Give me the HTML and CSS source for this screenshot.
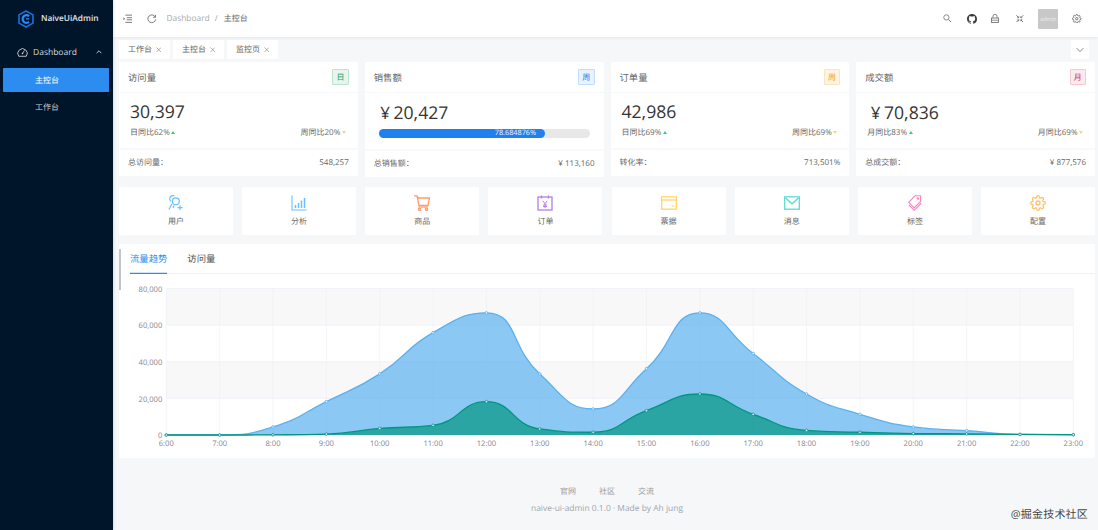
FILE: index.html
```html
<!DOCTYPE html>
<html lang="zh-CN">
<head>
<meta charset="utf-8">
<title>NaiveUiAdmin</title>
<link rel="stylesheet" href="styles.css">
</head>
<body>
<div class="app">
  <aside class="sidebar">
    <div class="brand">
      <svg class="brand-icon" viewBox="0 0 16 18"><path d="M8 1 15 4.900v8.200L8 17 1 13.100V4.900z" fill="none" stroke="#1d6fe0" stroke-width="1.600"/><path d="M11 6.200A3.800 3.800 0 1 0 11 11.800" fill="none" stroke="#2a8cf5" stroke-width="2.200"/><path d="M8 8.900h3.200" stroke="#2a8cf5" stroke-width="1.300"/></svg>
      <span>NaiveUiAdmin</span>
    </div>
    <div class="menu-group">
      <svg class="menu-icon" viewBox="0 0 14 14"><path d="M2.200 11.800A6 6 0 1 1 11.800 11.800z" fill="none" stroke="#d5d8dc" stroke-width="1.100"/><path d="M7 8 9.500 4.500" stroke="#d5d8dc" stroke-width="1.100"/><circle cx="7" cy="8.200" r="1" fill="#d5d8dc"/></svg>
      <span class="menu-label">Dashboard</span>
      <svg class="menu-arrow" viewBox="0 0 10 10"><path d="M2 6.500 5 3.500 8 6.500" fill="none" stroke="#d5d8dc" stroke-width="1.100"/></svg>
    </div>
    <div class="menu-item active">主控台</div>
    <div class="menu-item">工作台</div>
  </aside>

  <div class="content">
    <header class="topbar">
      <div class="top-left">
        <svg class="ti" viewBox="0 0 10 10"><path d="M2.500 1.200h7M4 3.900h5.500M4 6.100h5.500M2.500 8.800h7" stroke="#666" stroke-width=".9"/><path d="M.5 3.500 2.200 5 .5 6.500z" fill="#666"/></svg>
        <svg class="ti reload" viewBox="0 0 10 10"><path d="M8.700 3.200A4.100 4.100 0 1 0 9.100 5.600" fill="none" stroke="#666" stroke-width=".9"/><path d="M8.900 .9v2.600H6.500" fill="none" stroke="#666" stroke-width=".9"/></svg>
        <nav class="crumbs"><span class="crumb-muted">Dashboard</span><span class="crumb-sep">/</span><span class="crumb-current">主控台</span></nav>
      </div>
      <div class="top-right">
        <svg class="ti s-search" viewBox="0 0 10 10"><circle cx="4" cy="4" r="3.100" fill="none" stroke="#777" stroke-width="1"/><path d="M6.300 6.300 9.500 9.500" stroke="#777" stroke-width="1.100"/></svg>
        <svg class="ti s-git" viewBox="0 0 16 16"><path fill="#3a3a3a" d="M8 0C3.580 0 0 3.580 0 8c0 3.540 2.290 6.530 5.470 7.590.4.070.55-.17.55-.38 0-.19-.01-.82-.01-1.490-2.010.37-2.530-.49-2.690-.94-.09-.23-.48-.94-.82-1.130-.28-.15-.68-.52-.01-.53.63-.01 1.080.58 1.230.82.720 1.210 1.870.87 2.330.66.070-.52.280-.87.510-1.070-1.780-.2-3.640-.89-3.640-3.950 0-.87.310-1.590.820-2.150-.08-.2-.36-1.020.080-2.120 0 0 .670-.21 2.200.820.640-.18 1.320-.27 2-.27.680 0 1.360.090 2 .270 1.530-1.040 2.200-.82 2.200-.82.440 1.100.160 1.920.080 2.120.510.560.820 1.270.820 2.150 0 3.070-1.870 3.750-3.650 3.950.290.250.540.730.540 1.480 0 1.070-.01 1.930-.01 2.200 0 .210.150.460.550.380A8.013 8.013 0 0 0 16 8c0-4.420-3.580-8-8-8z"/></svg>
        <svg class="s-lock" viewBox="0 0 8 9"><path d="M2 4V2.300a2 2 0 0 1 4 0V4" fill="none" stroke="#777" stroke-width=".9"/><rect x=".5" y="4" width="7" height="4.500" fill="none" stroke="#777" stroke-width=".9"/><path d="M.5 6.200h7" stroke="#777" stroke-width=".8"/></svg>
        <svg class="s-full" viewBox="0 0 8 8"><g fill="none" stroke="#666" stroke-width=".9"><path d="M.3.300 2.800 2.800M7.700.3 5.200 2.800M.3 7.700 2.800 5.200M7.700 7.700 5.200 5.200"/><path d="M1.400 2.900h1.500V1.400M6.600 2.900H5.100V1.400M1.400 5.100h1.500v1.500M6.600 5.100H5.100v1.500"/></g></svg>
        <div class="avatar">admin</div>
        <svg class="ti s-gear" viewBox="0 0 24 24"><g fill="none" stroke="#666" stroke-width="2.200"><circle cx="12" cy="12" r="3"/><path d="M19.400 15a1.650 1.650 0 0 0 .33 1.820l.06.06a2 2 0 0 1 0 2.830 2 2 0 0 1-2.830 0l-.06-.06a1.650 1.650 0 0 0-1.820-.33 1.650 1.650 0 0 0-1 1.510V21a2 2 0 0 1-2 2 2 2 0 0 1-2-2v-.09A1.650 1.650 0 0 0 9 19.400a1.650 1.650 0 0 0-1.820.33l-.06.06a2 2 0 0 1-2.830 0 2 2 0 0 1 0-2.830l.06-.06a1.650 1.650 0 0 0 .33-1.820 1.650 1.650 0 0 0-1.510-1H3a2 2 0 0 1-2-2 2 2 0 0 1 2-2h.09A1.650 1.650 0 0 0 4.600 9a1.650 1.650 0 0 0-.33-1.820l-.06-.06a2 2 0 0 1 0-2.830 2 2 0 0 1 2.830 0l.06.06a1.650 1.650 0 0 0 1.820.33H9a1.650 1.650 0 0 0 1-1.510V3a2 2 0 0 1 2-2 2 2 0 0 1 2 2v.09a1.650 1.650 0 0 0 1 1.510 1.650 1.650 0 0 0 1.820-.33l.06-.06a2 2 0 0 1 2.830 0 2 2 0 0 1 0 2.830l-.06.06a1.650 1.650 0 0 0-.33 1.820V9a1.650 1.650 0 0 0 1.510 1H21a2 2 0 0 1 2 2 2 2 0 0 1-2 2h-.09a1.650 1.650 0 0 0-1.510 1z"/></g></svg>
      </div>
    </header>

    <div class="tabs">
      <div class="tab">工作台<svg class="x" viewBox="0 0 6 6"><path d="M.5.500l5 5M5.500.500l-5 5" stroke="#888" stroke-width=".7"/></svg></div>
      <div class="tab">主控台<svg class="x" viewBox="0 0 6 6"><path d="M.5.500l5 5M5.500.500l-5 5" stroke="#888" stroke-width=".7"/></svg></div>
      <div class="tab">监控页<svg class="x" viewBox="0 0 6 6"><path d="M.5.500l5 5M5.500.500l-5 5" stroke="#888" stroke-width=".7"/></svg></div>
      <div class="tab-more"><svg viewBox="0 0 8 6" class="more-arrow"><path d="M.7 1.200 4 4.600 7.300 1.200" fill="none" stroke="#666" stroke-width=".8"/></svg></div>
    </div>

    <section class="cards">
      <article class="card">
        <div class="card-head"><span>访问量</span><span class="tag green">日</span></div>
        <div class="card-body">
          <div class="num">30,397</div>
          <div class="stats"><span>日同比62%<i class="up"></i></span><span>周同比20%<i class="down"></i></span></div>
        </div>
        <div class="card-foot"><span>总访问量：</span><span>548,257</span></div>
      </article>
      <article class="card progress-card">
        <div class="card-head"><span>销售额</span><span class="tag blue">周</span></div>
        <div class="card-body">
          <div class="num"><span class="cur">¥</span>20,427</div>
          <div class="bar"><div class="bar-fill">78.684876%</div></div>
        </div>
        <div class="card-foot"><span>总销售额：</span><span>¥ 113,160</span></div>
      </article>
      <article class="card">
        <div class="card-head"><span>订单量</span><span class="tag orange">周</span></div>
        <div class="card-body">
          <div class="num">42,986</div>
          <div class="stats"><span>日同比69%<i class="up"></i></span><span>周同比69%<i class="down"></i></span></div>
        </div>
        <div class="card-foot"><span>转化率：</span><span>713,501%</span></div>
      </article>
      <article class="card money-card">
        <div class="card-head"><span>成交额</span><span class="tag red">月</span></div>
        <div class="card-body">
          <div class="num"><span class="cur">¥</span>70,836</div>
          <div class="stats"><span>月同比83%<i class="up"></i></span><span>月同比69%<i class="down"></i></span></div>
        </div>
        <div class="card-foot"><span>总成交额：</span><span>¥ 877,576</span></div>
      </article>
    </section>

    <section class="shortcuts">
      <div class="shortcut">
        <svg class="si" viewBox="0 0 16 16" fill="none" stroke="#69c0ff" stroke-width="1.200"><circle cx="7.800" cy="6.300" r="3.500"/><path d="M6.500 .8C4.500.2 2.300 1 1.800 3c-.3 1.300.2 2.500 1 3.500M3.800 9 1 14.500M6 10.500 5 13M12 10.500v4.500M9.500 12.700h5"/></svg>
        <span>用户</span>
      </div>
      <div class="shortcut">
        <svg class="si" viewBox="0 0 16 16" fill="none" stroke="#69c0ff"><path d="M1 .5V15h14.500" stroke-width="1.100"/><path d="M4.500 10v3M7.500 8v5M10.500 5.500V13M13.500 3v10" stroke-width="1.500"/></svg>
        <span>分析</span>
      </div>
      <div class="shortcut">
        <svg class="si" viewBox="0 0 16 16" fill="none" stroke="#ff9c6e" stroke-width="1.300"><path d="M0 .8h3l1.500 2.200h11L14 10.500H5L3 .8"/><path d="M4.500 12h9.500"/><circle cx="5.500" cy="14.300" r="1.100"/><circle cx="12.500" cy="14.300" r="1.100"/></svg>
        <span>商品</span>
      </div>
      <div class="shortcut">
        <svg class="si" viewBox="0 0 16 16" fill="none" stroke="#b37feb" stroke-width="1.300"><rect x="1" y="2" width="14" height="13"/><path d="M4.500 .5v3M11.500 .5v3"/><path d="M5.800 5.800 8 8.800l2.200-3M8 8.800V13M6 10h4M6 11.500h4" stroke-width="1"/></svg>
        <span>订单</span>
      </div>
      <div class="shortcut">
        <svg class="si" viewBox="0 0 16 16" fill="none" stroke="#ffd666" stroke-width="1.300"><rect x=".7" y="1.800" width="14.600" height="12.400"/><path d="M.7 5h14.600"/><path d="M10.500 11h3" stroke-width="1.100"/></svg>
        <span>票据</span>
      </div>
      <div class="shortcut">
        <svg class="si" viewBox="0 0 16 16" fill="none" stroke="#5cdbd3" stroke-width="1.300"><rect x=".7" y="1.800" width="14.600" height="12.400"/><path d="M1.500 3 8 8.800 14.500 3"/></svg>
        <span>消息</span>
      </div>
      <div class="shortcut">
        <svg class="si" viewBox="0 0 16 16" fill="none" stroke="#ff85c0" stroke-width="1.100"><path d="M8 .8h5.500v5.700L7.200 13 1.800 7.300z"/><path d="M14.300 8 7.200 15.300 2 10"/><circle cx="10.800" cy="3.500" r=".7"/></svg>
        <span>标签</span>
      </div>
      <div class="shortcut">
        <svg class="si" viewBox="0 0 24 24" fill="none" stroke="#ffc069" stroke-width="1.900"><circle cx="12" cy="12" r="3"/><path d="M19.400 15a1.650 1.650 0 0 0 .33 1.820l.06.06a2 2 0 0 1 0 2.830 2 2 0 0 1-2.830 0l-.06-.06a1.650 1.650 0 0 0-1.820-.33 1.650 1.650 0 0 0-1 1.510V21a2 2 0 0 1-2 2 2 2 0 0 1-2-2v-.09A1.650 1.650 0 0 0 9 19.400a1.650 1.650 0 0 0-1.820.33l-.06.06a2 2 0 0 1-2.830 0 2 2 0 0 1 0-2.830l.06-.06a1.650 1.650 0 0 0 .33-1.820 1.650 1.650 0 0 0-1.510-1H3a2 2 0 0 1-2-2 2 2 0 0 1 2-2h.09A1.650 1.650 0 0 0 4.600 9a1.650 1.650 0 0 0-.33-1.820l-.06-.06a2 2 0 0 1 0-2.830 2 2 0 0 1 2.830 0l.06.06a1.650 1.650 0 0 0 1.820.33H9a1.650 1.650 0 0 0 1-1.510V3a2 2 0 0 1 2-2 2 2 0 0 1 2 2v.09a1.650 1.650 0 0 0 1 1.510 1.650 1.650 0 0 0 1.820-.33l.06-.06a2 2 0 0 1 2.830 0 2 2 0 0 1 0 2.830l-.06.06a1.650 1.650 0 0 0-.33 1.820V9a1.650 1.650 0 0 0 1.510 1H21a2 2 0 0 1 2 2 2 2 0 0 1-2 2h-.09a1.650 1.650 0 0 0-1.510 1z"/></svg>
        <span>配置</span>
      </div>
    </section>

    <section class="panel">
      <div class="scroll-thumb"></div>
      <div class="panel-tabs">
        <div class="panel-tab current">流量趋势</div>
        <div class="panel-tab">访问量</div>
      </div>
      <div id="chart" class="chart"></div>
    </section>

    <footer class="foot">
      <div class="foot-links"><span>官网</span><span>社区</span><span>交流</span></div>
      <div class="copy">naive-ui-admin 0.1.0 · Made by Ah jung</div>
    </footer>
  </div>
  <div class="watermark">@掘金技术社区</div>
</div>
<script src="chart.js"></script>
</body>
</html>
```
FILE: styles.css
```css
* { box-sizing: border-box; }
html, body { margin: 0; padding: 0; height: 100%; overflow: hidden; }
body {
  font-family: "Open Sans", "Noto Sans CJK SC", sans-serif;
  font-size: 8px;
  color: #515a6e;
  background: #f5f7f9;
  text-rendering: geometricPrecision;
}
.app { position: relative; display: flex; width: 1098px; height: 530px; overflow: hidden; }

/* sidebar */
.sidebar { width: 113px; flex: none; background: #00152a; color: #d5d8dc; box-shadow: 1px 0 2px rgba(29,35,41,.12); z-index: 2; }
.brand { display: flex; align-items: center; gap: 7.500px; height: 37px; padding-left: 17.500px; color: #e3e6ea; font-size: 8.300px; font-weight: 600; }
.brand-icon { width: 16px; height: 18px; flex: none; }
.menu-group { display: flex; align-items: center; height: 20px; margin-top: 5px; padding: 0 10px 0 17px; color: #d5d8dc; font-size: 8.500px; }
.menu-icon { width: 11px; height: 11px; margin-right: 5px; }
.menu-label { flex: 1; }
.menu-arrow { width: 8px; height: 8px; }
.menu-item { display: flex; align-items: center; height: 24px; margin: 6px 4.500px 3px 3px; padding-left: 32px; color: #c6cbd1; font-size: 8px; border-radius: 1px; }
.menu-item.active { background: #2d8cf0; color: #fff; }
.menu-item + .menu-item { margin-top: 3px; }

/* main column */
.content { flex: 1; min-width: 0; display: flex; flex-direction: column; padding: 0; }
.topbar { display: flex; align-items: center; justify-content: space-between; height: 37px; flex: none; background: #fff; box-shadow: 0 1px 3px rgba(0,21,41,.07); padding: 0 16.200px 0 10px; }
.top-left, .top-right { display: flex; align-items: center; }
.ti { width: 9.500px; height: 9.500px; flex: none; }
.reload { margin-left: 14.500px; }
.crumbs { display: flex; align-items: center; margin-left: 10px; font-size: 8px; }
.crumb-muted { color: #aaa; font-size: 8.400px; }
.crumb-sep { margin: 0 6px 0 5px; color: #999; }
.crumb-current { color: #666; }
.s-search { width: 8.500px; height: 8.500px; }
.s-git { width: 10px; height: 10px; margin-left: 15.200px; }
.s-lock { width: 8px; height: 9px; margin-left: 14.300px; flex: none; }
.s-full { width: 7.500px; height: 7.500px; margin-left: 17px; flex: none; }
.avatar { width: 20px; height: 20px; margin-left: 14.800px; background: #c8c8c8; color: #eee; font-size: 5.500px; line-height: 20px; text-align: center; border-radius: 1px; }
.s-gear { margin-left: 14px; }

.tabs { display: flex; align-items: stretch; gap: 3px; height: 19px; margin: 3px 9px 0 6px; flex: none; }
.tab { display: flex; align-items: center; gap: 3.500px; padding: 0 9px; background: #fff; color: #666; font-size: 8px; border-radius: 1px; }
.x { width: 5.500px; height: 5.500px; }
.tab-more { display: flex; align-items: center; justify-content: center; width: 18px; margin-left: auto; background: #fff; border-radius: 1px; }
.more-arrow { width: 8px; height: 6px; }

/* stat cards */
.cards { display: grid; grid-template-columns: repeat(4, 1fr); column-gap: 7px; margin: 3px 3px 0 6px; align-items: start; flex: none; }
.card { background: #fff; border-radius: 1.500px; }
.card-head { display: flex; align-items: center; justify-content: space-between; height: 31px; padding: 0 9px; border-bottom: 1px solid #f5f7f9; color: #666; font-size: 9.330px; }
.tag { display: flex; align-items: center; justify-content: center; width: 16.500px; height: 16px; border: 1px solid; border-radius: 1px; font-size: 8px; }
.green { color: #18a058; background: #e8f5ee; border-color: #bfe3cf; }
.blue { color: #2080f0; background: #e9f2fe; border-color: #c2dcfb; }
.orange { color: #f0a020; background: #fdf4e4; border-color: #fbe3bd; }
.red { color: #d03050; background: #fbeaee; border-color: #f3c9d2; }
.card-body { padding: 7px 12px 0 11px; height: 57px; border-bottom: 2px solid #f8f9fb; }
.progress-card .card-body { padding: 7px 14px 0 14px; height: 58px; }
.num { font-size: 17.600px; line-height: 25px; height: 25px; color: #333; }
.progress-card .num { padding-left: 1.500px; }
.money-card .num { padding-left: 3.500px; }
.cur { margin-right: 3.500px; font-size: 17px; }
.stats { display: flex; justify-content: space-between; margin-top: 2px; height: 12px; line-height: 12px; color: #666; font-size: 8px; }
.up, .down { display: inline-block; width: 0; height: 0; margin-left: 1.500px; vertical-align: 1px; border-left: 2.200px solid transparent; border-right: 2.200px solid transparent; }
.up { border-bottom: 3px solid #18e070; }
.down { border-top: 3px solid #ffd666; }
.bar { height: 9px; margin-top: 4px; background: #e8e8e8; border-radius: 5px; }
.bar-fill { width: 78.68%; height: 9px; padding-right: 8.500px; background: #2080f0; border-radius: 5px; color: #eaf3ff; font-size: 7.300px; line-height: 9px; text-align: right; }
.card-foot { display: flex; align-items: center; justify-content: space-between; height: 26px; padding: 0 9px 2px; color: #666; font-size: 8px; }

/* shortcuts */
.shortcuts { display: grid; grid-template-columns: repeat(8, 1fr); column-gap: 9.300px; margin: 9.500px 3px 0 6px; flex: none; }
.shortcut { display: flex; flex-direction: column; align-items: center; height: 48px; padding-top: 8px; background: #fff; border-radius: 1.500px; color: #666; font-size: 8px; }
.si { width: 16px; height: 16px; flex: none; margin-bottom: 5px; }

/* chart panel */
.panel { position: relative; margin: 9.500px 3px 0 6px; height: 214px; background: #fff; border-radius: 1.500px; flex: none; }
.scroll-thumb { position: absolute; left: 0; top: 5px; width: 2px; height: 41px; background: #c4c4c6; }
.panel-tabs { display: flex; gap: 20px; height: 30px; margin-left: 11px; border-bottom: 1px solid #eff1f5; font-size: 9.330px; color: #555; }
.panel-tab { display: flex; align-items: center; height: 30px; padding: 0 0 2px; }
.panel-tab.current { color: #2d8cf0; box-shadow: inset 0 -1.300px 0 #2d8cf0; }
.chart { height: 184px; }
.chart svg { display: block; width: 976px; height: 184px; }
.axis { font-size: 7.600px; fill: #85858f; font-family: "Open Sans", sans-serif; }

/* footer */
.foot { flex: 1; text-align: center; color: #999; font-size: 8px; padding: 28px 0 0 3px; }
.foot-links { display: flex; justify-content: center; gap: 23px; line-height: 12px; }
.copy { margin-top: 4.500px; color: #a3a6ae; font-size: 8.450px; line-height: 12px; }

.watermark { position: absolute; right: 10px; bottom: 8px; color: #444; font-size: 11px; line-height: 14px; letter-spacing: .2px; text-shadow: 0 0 2px #fff; font-weight: 400; }
```
FILE: chart.js
```js
(function () {
  var blue = [0, 0, 4400, 18200, 33400, 55900, 66700, 33300, 14200, 36200, 66700, 44500, 22400, 11300, 4400, 2400, 300, 100];
  var teal = [0, 0, 100, 500, 3600, 5300, 18200, 3300, 1500, 13300, 22400, 11300, 2500, 1500, 800, 600, 300, 200];
  var x0 = 47.3, x1 = 954.3, y0 = 161, yTop = 14.5;
  var step = (x1 - x0) / 17;
  var yv = function (v) { return y0 - (v / 80000) * (y0 - yTop); };
  var xv = function (i) { return x0 + i * step; };
  var out = [];

  // split bands
  var h = (y0 - yTop) / 4;
  out.push('<rect x="' + x0 + '" y="' + yTop + '" width="' + (x1 - x0) + '" height="' + h + '" fill="#f8f8f9"/>');
  out.push('<rect x="' + x0 + '" y="' + (yTop + 2 * h) + '" width="' + (x1 - x0) + '" height="' + h + '" fill="#f8f8f9"/>');

  // grid
  var i;
  for (i = 0; i < 18; i++) {
    out.push('<path d="M' + xv(i) + ' ' + yTop + 'V' + y0 + '" stroke="#eff0f6" stroke-width=".7"/>');
  }
  for (i = 0; i < 5; i++) {
    var y = yTop + i * h;
    out.push('<path d="M' + x0 + ' ' + y + 'H' + x1 + '" stroke="#eff0f6" stroke-width="' + (i === 4 ? 1 : .8) + '"/>');
    out.push('<text class="axis" text-anchor="end" x="' + (x0 - 4) + '" y="' + (y + 3.2) + '">' + ['80,000', '60,000', '40,000', '20,000', '0'][i] + '</text>');
  }
  for (i = 0; i < 18; i++) {
    out.push('<text class="axis" text-anchor="middle" x="' + xv(i) + '" y="' + (y0 + 11) + '">' + (i + 6) + ':00</text>');
  }

  function smooth(data) {
    var pts = data.map(function (v, i) { return [xv(i), yv(v)]; });
    var s = 0.5, d = 'M' + pts[0][0] + ' ' + pts[0][1];
    var cpx = pts[0][0], cpy = pts[0][1];
    var clamp = function (v, a, b) { return Math.max(Math.min(v, Math.max(a, b)), Math.min(a, b)); };
    for (var i = 1; i < pts.length; i++) {
      var p = pts[i], prev = pts[i - 1], next = pts[Math.min(i + 1, pts.length - 1)];
      var cx1, cy1, nx, ny;
      if (i === pts.length - 1) {
        cx1 = p[0]; cy1 = p[1]; nx = p[0]; ny = p[1];
      } else {
        var vx = next[0] - prev[0], vy = next[1] - prev[1];
        var lp = Math.hypot(p[0] - prev[0], p[1] - prev[1]);
        var ln = Math.hypot(next[0] - p[0], next[1] - p[1]);
        var r = ln / (ln + lp);
        nx = p[0] + vx * r * s;
        ny = clamp(p[1] + vy * r * s, p[1], next[1]);
        var dx = nx - p[0], dy = ny - p[1];
        cx1 = p[0] - dx * lp / ln;
        cy1 = clamp(p[1] - dy * lp / ln, p[1], prev[1]);
        dx = p[0] - cx1; dy = p[1] - cy1;
        nx = p[0] + dx * ln / lp;
        ny = p[1] + dy * ln / lp;
      }
      d += 'C' + cpx.toFixed(2) + ' ' + cpy.toFixed(2) + ' ' + cx1.toFixed(2) + ' ' + cy1.toFixed(2) + ' ' + p[0].toFixed(2) + ' ' + p[1].toFixed(2);
      cpx = nx; cpy = ny;
    }
    return { d: d, pts: pts };
  }

  function series(data, color) {
    var c = smooth(data);
    out.push('<path d="' + c.d + 'L' + x1 + ' ' + y0 + 'L' + x0 + ' ' + y0 + 'Z" fill="' + color + '" fill-opacity=".7"/>');
    out.push('<path d="' + c.d + '" fill="none" stroke="' + color + '" stroke-width="1.300"/>');
    return c.pts;
  }
  function dots(pts, color) {
    pts.forEach(function (p) {
      out.push('<circle cx="' + p[0] + '" cy="' + p[1] + '" r="1.300" fill="#d8eefc" stroke="' + color + '" stroke-width=".8"/>');
    });
  }
  var pb = series(blue, '#5ab1ef');
  var pt = series(teal, '#019680');
  dots(pb, '#5ab1ef');
  dots(pt, '#019680');

  document.getElementById('chart').innerHTML = '<svg viewBox="0 0 976 184" xmlns="http://www.w3.org/2000/svg">' + out.join('') + '</svg>';
})();
```
